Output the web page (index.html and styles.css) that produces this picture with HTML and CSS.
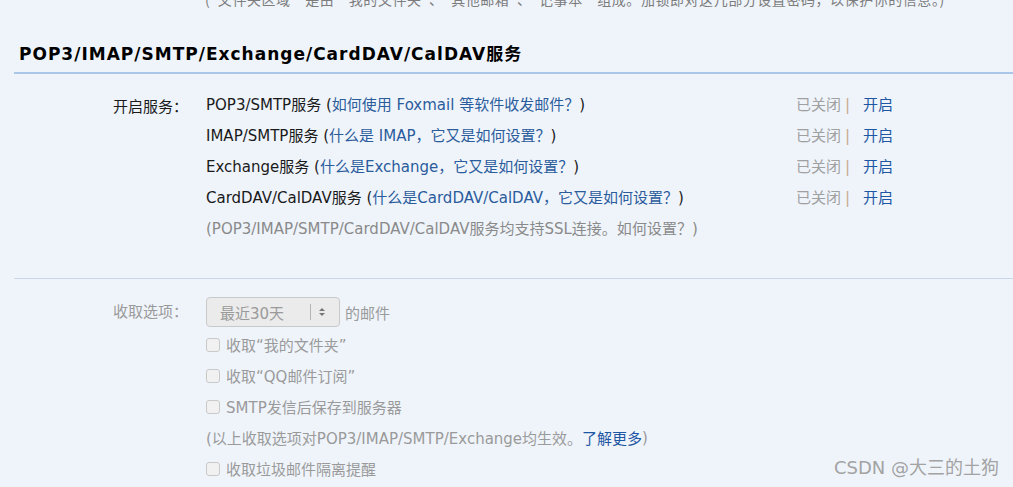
FILE: index.html
```html
<html>
	<head>
		<title>POP3/IMAP/SMTP/Exchange/CardDAV/CalDAV服务</title>
		<link rel="stylesheet" href="styles.css">
	</head>
	<body>

		<div class="Note">(“文件夹区域”是由“我的文件夹”、“其他邮箱”、“记事本”组成。加锁即对这几部分设置密码，以保护你的信息。)</div>

		<div class="Title">POP3/IMAP/SMTP/Exchange/CardDAV/CalDAV服务</div>

		<div class="Group">
			<div class="Label">开启服务：</div>
			<div class="Rows">
				<div class="Row">
					<span class="Name">POP3/SMTP服务 (<a class="Help">如何使用 Foxmail 等软件收发邮件？</a>)</span>
					<span class="State">已关闭<i class="Sep">|</i><a class="On">开启</a></span>
				</div>
				<div class="Row">
					<span class="Name">IMAP/SMTP服务 (<a class="Help">什么是 IMAP，它又是如何设置？</a>)</span>
					<span class="State">已关闭<i class="Sep">|</i><a class="On">开启</a></span>
				</div>
				<div class="Row">
					<span class="Name">Exchange服务 (<a class="Help">什么是Exchange，它又是如何设置？</a>)</span>
					<span class="State">已关闭<i class="Sep">|</i><a class="On">开启</a></span>
				</div>
				<div class="Row">
					<span class="Name">CardDAV/CalDAV服务 (<a class="Help">什么是CardDAV/CalDAV，它又是如何设置？</a>)</span>
					<span class="State">已关闭<i class="Sep">|</i><a class="On">开启</a></span>
				</div>
				<div class="Row Gray">(POP3/IMAP/SMTP/CardDAV/CalDAV服务均支持SSL连接。如何设置？)</div>
			</div>
		</div>

		<div class="Divider"></div>

		<div class="Group Disabled">
			<div class="Label">收取选项：</div>
			<div class="Rows">
				<div class="Row First">
					<span class="Select">
						<span class="SelectText">最近30天</span>
						<span class="SelectBar"></span>
						<span class="Arrows"><b class="Up"></b><b class="Down"></b></span>
					</span>
					<span class="After">的邮件</span>
				</div>
				<div class="Row"><span class="Box"></span>收取“我的文件夹”</div>
				<div class="Row"><span class="Box"></span>收取“QQ邮件订阅”</div>
				<div class="Row"><span class="Box"></span>SMTP发信后保存到服务器</div>
				<div class="Row Hint">(以上收取选项对POP3/IMAP/SMTP/Exchange均生效。<a class="More">了解更多</a>)</div>
				<div class="Row"><span class="Box"></span>收取垃圾邮件隔离提醒</div>
			</div>
		</div>

		<div class="Mark">CSDN @大三的土狗</div>
	</body>
</html>
```

FILE: styles.css
```css
html, body {margin: 0; height: 100%; overflow: hidden; background-color: #eff4fb;}
body {
	position: relative;
	font-family: "DejaVu Sans", "Noto Sans CJK SC", sans-serif;
	font-size: 15px;
	color: #1a1a1a;
	padding-left: 14px;
}

.Note {
	margin-top: -11px;
	height: 20px;
	line-height: 20px;
	padding-left: 191px;
	font-family: "Noto Sans CJK SC", sans-serif;
	font-size: 14px;
	letter-spacing: 0.55px;
	color: #7d7d7d;
	white-space: nowrap;
}

.Title {
	margin-top: 33px;
	padding-left: 5px;
	padding-bottom: 6px;
	font-weight: bold;
	font-size: 17px;
	letter-spacing: 1px;
	line-height: 24px;
	color: #000;
	border-bottom: 2px solid #aac6e8;
}

.Group {
	display: grid;
	grid-template-columns: 192px 1fr;
	margin-top: 14px;
}
.Label {
	padding-left: 99px;
	padding-top: 4px;
	line-height: 31px;
}
.Row {
	display: flex;
	align-items: center;
	height: 31px;
	white-space: nowrap;
}
.Name {width: 590px;}
.Help {color: #2b5c9c;}
.State {color: #a0a0a0;}
.Sep {
	font-style: normal;
	color: #c8ab8f;
	margin: 0 13px 0 4px;
}
.On {color: #1d57a3;}
.Gray {color: #8a8a8a;}

.Divider {
	margin-top: 35px;
	height: 1px;
	background-color: #c9d9ea;
}

.Disabled {margin-top: 16px;}
.Disabled .Label {padding-top: 0; line-height: 34px; color: #9a9a9a;}
.Disabled .Row {color: #9a9a9a;}
.Disabled .First {height: 34px;}

.Select {
	display: flex;
	align-items: center;
	box-sizing: border-box;
	width: 134px;
	height: 30px;
	border: 1px solid #c9c9c9;
	border-radius: 4px;
	background-color: #ebebeb;
}
.SelectText {
	width: 90px;
	padding-left: 13px;
	color: #9a9a9a;
}
.SelectBar {
	width: 1px;
	height: 16px;
	background-color: #b5b5b5;
}
.Arrows {
	display: flex;
	flex-direction: column;
	gap: 2px;
	margin-left: 8px;
}
.Up, .Down {
	width: 0;
	height: 0;
	border-left: 3px solid transparent;
	border-right: 3px solid transparent;
}
.Up {border-bottom: 3px solid #777;}
.Down {border-top: 3px solid #777;}
.After {margin-left: 5px;}

.Box {
	box-sizing: border-box;
	width: 14px;
	height: 14px;
	border: 1px solid #c9c9c9;
	border-radius: 3px;
	background-color: #f1f1f1;
	margin-right: 6px;
}
.Hint {color: #777;}
.More {color: #1d57a3;}

.Mark {
	position: absolute;
	right: 14px;
	bottom: 8px;
	font-size: 18px;
	color: #a3a3a3;
}
```
